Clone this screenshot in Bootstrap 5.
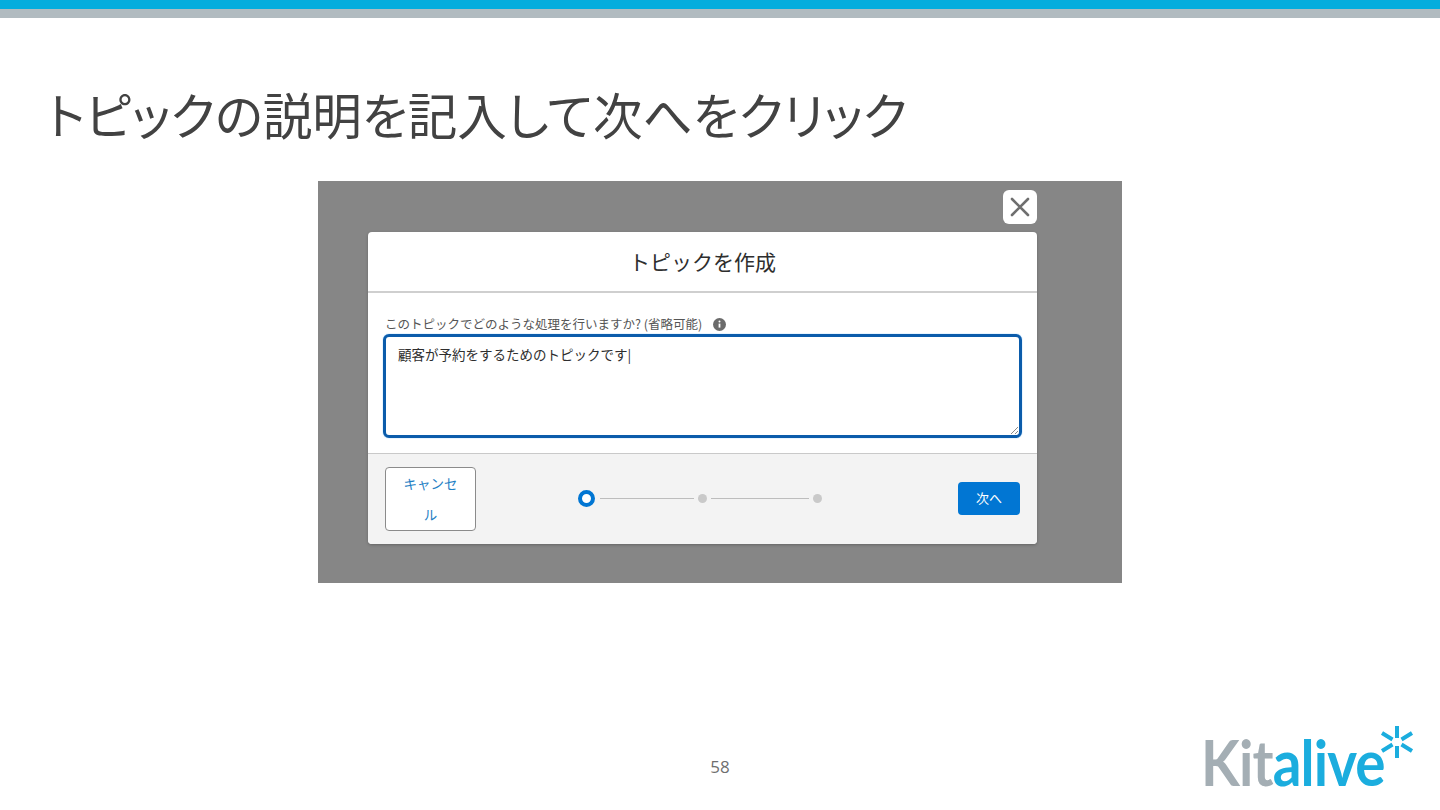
<!doctype html>
<html lang="ja">
<head>
<meta charset="utf-8">
<title>トピックを作成</title>
<link href="https://cdn.jsdelivr.net/npm/bootstrap@5.3.0/dist/css/bootstrap.min.css" rel="stylesheet">
<style>
html,body{height:810px;overflow:hidden;background:#fff}
body{font-family:"Noto Sans CJK JP","Noto Sans",sans-serif;position:relative;display:flex;flex-direction:column}
.bar-a{height:9px;background:#05addd}
.bar-b{height:9px;background:#b1bbc0}
.slide-title{font-size:49.6px;line-height:66px;color:#424242;margin:62px 0 0 47px;font-weight:400;font-feature-settings:"palt";white-space:nowrap}
.shade{width:804px;height:402px;background:#868686;margin:35px 0 0 318px;padding:51px 85px 0 50px;position:relative}
.x-btn{position:absolute;left:685px;top:9px;width:34px;height:34px;background:#fff;border:0;border-radius:6px;padding:0;display:flex;align-items:center;justify-content:center}
.dlg{background:#fff;border-radius:4px;box-shadow:0 1px 3px rgba(0,0,0,.25);height:312px;display:flex;flex-direction:column;overflow:hidden}
.dlg-head{height:61px;border-bottom:2px solid #cfcfcf;text-align:center;font-size:21px;line-height:59px;color:#2e2e2e}
.dlg-body{height:161px;padding:22px 15px 0 17px;border-bottom:1px solid #c9c9c9}
.fld-label{font-size:12.5px;line-height:18px;color:#555;display:flex;align-items:center;height:18px;white-space:nowrap}
.fld-label svg{margin-left:11px}
.fld-area{width:639px;height:104px;margin:1px 0 0 -2px;border:3px solid #0b5cab;border-radius:6px;font-size:13.5px;line-height:20px;padding:7px 12px;color:#2e2e2e;box-shadow:0 0 1px #1b96ff;position:relative}
.grip-mark{position:absolute;right:0;bottom:0}
.dlg-foot{flex:1;background:#f3f3f3;position:relative;display:flex;align-items:center;padding:0 17px}
.cancel-btn{width:91px;height:64px;background:#fff;border:1px solid #8b8b8b;border-radius:4px;color:#1f80c4;font-size:13.5px;line-height:31px;padding:0 14px;word-break:break-all;flex:none}
.step-track{display:flex;align-items:center;margin:-2px 0 0 102px;flex:none}
.step-now{width:17px;height:17px;border:4px solid #0176d3;border-radius:50%;background:#fff}
.step-line{height:1px;background:#bdbdbd}
.line-one{width:94px;margin:0 4px 0 5px}
.line-two{width:98px;margin:0 4px}
.step-dot{width:9px;height:9px;border-radius:50%;background:#c9c9c9}
.next-btn{margin:-2px 0 0 auto;width:62px;height:33px;background:#0176d3;border:0;border-radius:4px;color:#fff;font-size:13px;padding:0}
.page-num{position:absolute;left:0;right:0;top:756px;text-align:center;font:17px/22px "Open Sans",sans-serif;color:#6f6f6f}
.brand{position:absolute;left:1201px;top:730px;height:64px;display:flex;align-items:flex-end;font:700 64px/64px "Lato","Open Sans",sans-serif;white-space:nowrap;transform:scaleX(.885);transform-origin:0 0}
.brand-grey{color:#a4aeb4;letter-spacing:-1px}
.brand-blue{color:#1badde;letter-spacing:-1px}
.brand-star{position:absolute;left:1380px;top:724px}
</style>
</head>
<body>
<div class="bar-a"></div>
<div class="bar-b"></div>
<h1 class="slide-title">トピックの説明を記入して次へをクリック</h1>
<div class="shade">
  <button class="x-btn" type="button" aria-label="閉じる">
    <svg width="20" height="20" viewBox="0 0 20 20"><path d="M2 2 18 18M18 2 2 18" stroke="#6f6f6f" stroke-width="2.6" stroke-linecap="round"/></svg>
  </button>
  <div class="dlg">
    <div class="dlg-head">トピックを作成</div>
    <div class="dlg-body">
      <label class="fld-label">このトピックでどのような処理を行いますか? (省略可能)
        <svg width="13" height="13" viewBox="0 0 13 13"><circle cx="6.5" cy="6.5" r="6.5" fill="#6b6b6b"/><path d="M6.5 5.6v4" stroke="#fff" stroke-width="1.8"/><circle cx="6.5" cy="3.6" r="1" fill="#fff"/></svg>
      </label>
      <div class="fld-area">顧客が予約をするためのトピックです<span>|</span>
        <svg class="grip-mark" width="9" height="9" viewBox="0 0 9 9"><path d="M1 8 8 1M5 8 8 5" stroke="#8a8a8a" stroke-width="1"/></svg>
      </div>
    </div>
    <div class="dlg-foot">
      <button class="cancel-btn" type="button">キャンセル</button>
      <div class="step-track">
        <div class="step-now"></div>
        <div class="step-line line-one"></div>
        <div class="step-dot"></div>
        <div class="step-line line-two"></div>
        <div class="step-dot"></div>
      </div>
      <button class="next-btn" type="button">次へ</button>
    </div>
  </div>
</div>
<div class="page-num">58</div>
<div class="brand"><span class="brand-grey">Kit</span><span class="brand-blue">alive</span></div>
<svg class="brand-star" width="34" height="36" viewBox="0 0 34 36" aria-hidden="true"><path d="M17 2V14M17 22V34M2 9 12.500 15.500M21.500 20.500 32 27M2 27 12.500 20.500M21.500 15.500 32 9" stroke="#1badde" stroke-width="4"/></svg>
</body>
</html>
